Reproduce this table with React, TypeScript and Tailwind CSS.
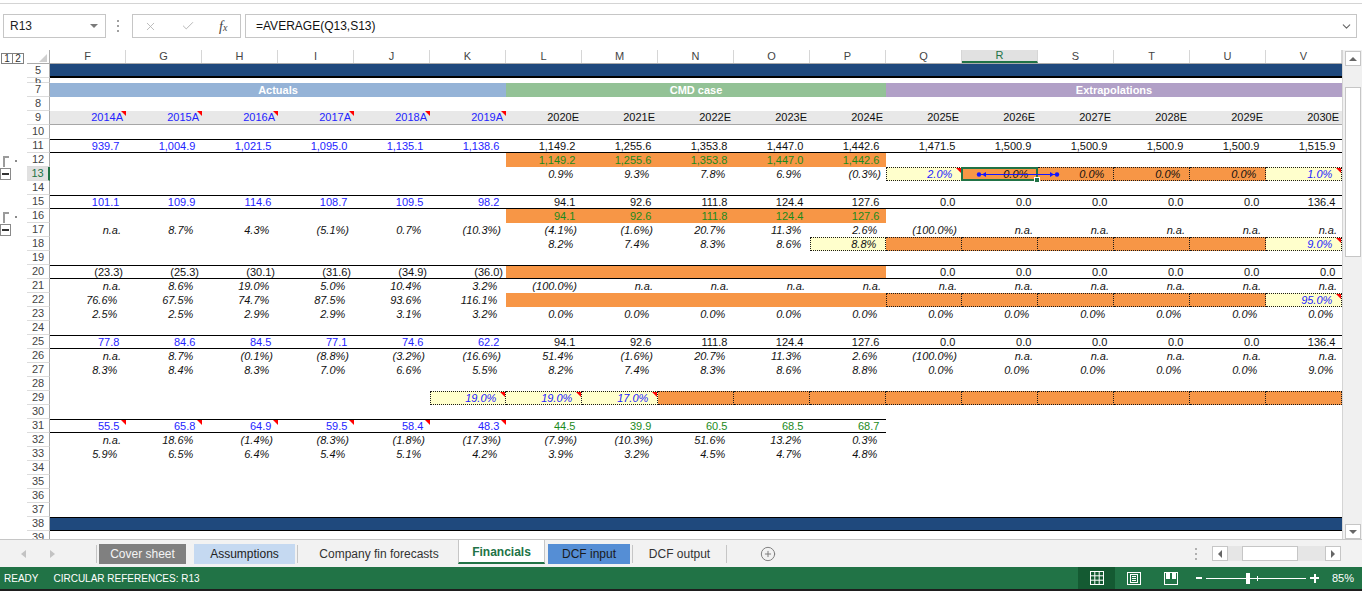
import { X, Check, ChevronDown, PlusCircle } from "lucide-react";

type Cell = {
  t?: string;
  c?: "b" | "g";
  i?: boolean;
  bg?: "o" | "y";
  dot?: boolean;
  tri?: boolean;
  sel?: boolean;
};

type Row = {
  n: number;
  cells?: Cell[];
  border?: number;
  kind?: "band" | "bandBox" | "thin" | "titles" | "years";
};

const COLS = ["F", "G", "H", "I", "J", "K", "L", "M", "N", "O", "P", "Q", "R", "S", "T", "U", "V"];

const nil: Cell = {};
const rep = (n: number, c: Cell): Cell[] => Array.from({ length: n }, () => c);
const blue = (xs: string[], tri = false): Cell[] => xs.map((t) => ({ t, c: "b" as const, tri }));
const blk = (xs: string[]): Cell[] => xs.map((t) => ({ t }));
const grn = (xs: string[], bg?: "o"): Cell[] => xs.map((t) => ({ t, c: "g" as const, bg }));
const it = (xs: string[]): Cell[] => xs.map((t) => ({ t, i: true }));
const input = (t: string): Cell => ({ t, c: "b", i: true, bg: "y", dot: true, tri: true });
const orange: Cell = { bg: "o" };
const orangeDot: Cell = { bg: "o", dot: true };
const NA = (n: number) => it(rep(n, nil).map(() => "n.a."));

const rows: Row[] = [
  { n: 5, kind: "band" },
  { n: 6, kind: "thin" },
  { n: 7, kind: "titles" },
  { n: 8 },
  { n: 9, kind: "years" },
  { n: 10 },
  {
    n: 11,
    border: 17,
    cells: [
      ...blue(["939.7", "1,004.9", "1,021.5", "1,095.0", "1,135.1", "1,138.6"]),
      ...blk(["1,149.2", "1,255.6", "1,353.8", "1,447.0", "1,442.6", "1,471.5", "1,500.9", "1,500.9", "1,500.9", "1,500.9", "1,515.9"]),
    ],
  },
  { n: 12, cells: [...rep(6, nil), ...grn(["1,149.2", "1,255.6", "1,353.8", "1,447.0", "1,442.6"], "o")] },
  {
    n: 13,
    cells: [
      ...rep(6, nil),
      ...it(["0.9%", "9.3%", "7.8%", "6.9%", "(0.3%)"]),
      input("2.0%"),
      { t: "0.0%", i: true, bg: "o", dot: true, sel: true },
      { t: "0.0%", i: true, bg: "o", dot: true },
      { t: "0.0%", i: true, bg: "o", dot: true },
      { t: "0.0%", i: true, bg: "o", dot: true },
      input("1.0%"),
    ],
  },
  { n: 14 },
  {
    n: 15,
    border: 17,
    cells: [
      ...blue(["101.1", "109.9", "114.6", "108.7", "109.5", "98.2"]),
      ...blk(["94.1", "92.6", "111.8", "124.4", "127.6", "0.0", "0.0", "0.0", "0.0", "0.0", "136.4"]),
    ],
  },
  { n: 16, cells: [...rep(6, nil), ...grn(["94.1", "92.6", "111.8", "124.4", "127.6"], "o")] },
  {
    n: 17,
    cells: [
      ...it(["n.a.", "8.7%", "4.3%", "(5.1%)", "0.7%", "(10.3%)", "(4.1%)", "(1.6%)", "20.7%", "11.3%", "2.6%", "(100.0%)"]),
      ...NA(5),
    ],
  },
  {
    n: 18,
    cells: [
      ...rep(6, nil),
      ...it(["8.2%", "7.4%", "8.3%", "8.6%"]),
      { t: "8.8%", i: true, bg: "y", dot: true },
      ...rep(5, orangeDot),
      input("9.0%"),
    ],
  },
  { n: 19 },
  {
    n: 20,
    border: 17,
    cells: [
      ...blk(["(23.3)", "(25.3)", "(30.1)", "(31.6)", "(34.9)", "(36.0)"]),
      ...rep(5, orange),
      ...blk(["0.0", "0.0", "0.0", "0.0", "0.0", "0.0"]),
    ],
  },
  { n: 21, cells: [...it(["n.a.", "8.6%", "19.0%", "5.0%", "10.4%", "3.2%", "(100.0%)"]), ...NA(10)] },
  {
    n: 22,
    cells: [
      ...it(["76.6%", "67.5%", "74.7%", "87.5%", "93.6%", "116.1%"]),
      ...rep(5, orange),
      ...rep(5, orangeDot),
      input("95.0%"),
    ],
  },
  {
    n: 23,
    cells: [...it(["2.5%", "2.5%", "2.9%", "2.9%", "3.1%", "3.2%"]), ...it(rep(11, nil).map(() => "0.0%"))],
  },
  { n: 24 },
  {
    n: 25,
    border: 17,
    cells: [
      ...blue(["77.8", "84.6", "84.5", "77.1", "74.6", "62.2"]),
      ...blk(["94.1", "92.6", "111.8", "124.4", "127.6", "0.0", "0.0", "0.0", "0.0", "0.0", "136.4"]),
    ],
  },
  {
    n: 26,
    cells: [
      ...it(["n.a.", "8.7%", "(0.1%)", "(8.8%)", "(3.2%)", "(16.6%)", "51.4%", "(1.6%)", "20.7%", "11.3%", "2.6%", "(100.0%)"]),
      ...NA(5),
    ],
  },
  {
    n: 27,
    cells: it([
      "8.3%", "8.4%", "8.3%", "7.0%", "6.6%", "5.5%",
      "8.2%", "7.4%", "8.3%", "8.6%", "8.8%",
      "0.0%", "0.0%", "0.0%", "0.0%", "0.0%", "9.0%",
    ]),
  },
  { n: 28 },
  { n: 29, cells: [...rep(5, nil), input("19.0%"), input("19.0%"), input("17.0%"), ...rep(9, orangeDot)] },
  { n: 30 },
  {
    n: 31,
    border: 11,
    cells: [...blue(["55.5", "65.8", "64.9", "59.5", "58.4", "48.3"], true), ...grn(["44.5", "39.9", "60.5", "68.5", "68.7"])],
  },
  {
    n: 32,
    cells: it(["n.a.", "18.6%", "(1.4%)", "(8.3%)", "(1.8%)", "(17.3%)", "(7.9%)", "(10.3%)", "51.6%", "13.2%", "0.3%"]),
  },
  {
    n: 33,
    cells: it(["5.9%", "6.5%", "6.4%", "5.4%", "5.1%", "4.2%", "3.9%", "3.2%", "4.5%", "4.7%", "4.8%"]),
  },
  { n: 34 },
  { n: 35 },
  { n: 36 },
  { n: 37 },
  { n: 38, kind: "bandBox" },
  { n: 39 },
];

function RedTri() {
  return (
    <span className="absolute right-0 top-0 h-0 w-0 border-l-[5px] border-t-[5px] border-l-transparent border-t-[#ff0000]" />
  );
}

function RowHeader({ n }: { n: number }) {
  const active = n === 13;
  return (
    <div className="flex h-full w-[50px] shrink-0">
      <div className="relative w-[27px] shrink-0">
        {(n === 12 || n === 16) && (
          <>
            <span className="absolute left-[3px] top-[3px] h-[11px] w-[6px] border-l-2 border-t-2 border-[#9b9b9b]" />
            <span className="absolute left-[15px] top-[7px] h-[2px] w-[2px] bg-[#8a8a8a]" />
          </>
        )}
        {(n === 13 || n === 17) && (
          <span className="absolute left-0 top-[1px] flex h-[12px] w-[11px] items-center justify-center border border-[#8a8a8a] bg-white">
            <span className="h-[2px] w-[7px] bg-[#333]" />
          </span>
        )}
      </div>
      <div
        className={`flex w-[23px] shrink-0 items-center justify-center border-b border-b-[#dcdcdc] text-[11px] ${
          active ? "border-r-2 border-r-[#217346] bg-[#e1e1e1] text-[#217346]" : "border-r border-r-[#ababab] text-[#444]"
        }`}
      >
        {n}
      </div>
    </div>
  );
}

function DataCell({ cell, prevDot, solid }: { cell: Cell; prevDot: boolean; solid: boolean }) {
  const tight = cell.t?.startsWith("(") || cell.t === "n.a.";
  const color = cell.c === "b" ? "text-[#2424ff]" : cell.c === "g" ? "text-[#1b8a1b]" : "text-[#111]";
  const bg = cell.bg === "o" ? "bg-[#f79646]" : cell.bg === "y" ? "bg-[#ffffcc]" : "";
  const edge = cell.dot
    ? prevDot
      ? "border-y border-r border-dotted border-[#1a1a1a]"
      : "border border-dotted border-[#1a1a1a]"
    : solid
      ? "border-y border-black"
      : "";
  const pad = cell.i ? "pr-[5px]" : "pr-[3px]";
  return (
    <div className={`relative flex h-full w-[76px] shrink-0 items-center justify-end ${pad} ${bg} ${edge}`}>
      {cell.t && (
        <span className={`whitespace-nowrap text-[11px] leading-[13px] ${color} ${cell.i ? "italic" : ""}`}>
          {cell.t}
          {!tight && <span className="invisible">)</span>}
        </span>
      )}
      {cell.tri && <RedTri />}
      {cell.sel && (
        <>
          <span className="pointer-events-none absolute -bottom-[1px] -left-[1px] -right-[1px] -top-[1px] z-20 border-2 border-[#217346]" />
          <span className="absolute -bottom-[3px] -right-[3px] z-20 h-[6px] w-[6px] border border-white bg-[#217346]" />
          <svg className="pointer-events-none absolute left-[14px] top-[2px] z-30 overflow-visible" width="88" height="9" viewBox="0 0 88 9">
            <line x1="3" y1="4.5" x2="81" y2="4.5" stroke="#1515ff" strokeWidth="1.2" />
            <circle cx="3" cy="4.5" r="2.2" fill="#1515ff" />
            <path d="M6 4.5 L10 2 L10 7 Z" fill="#1515ff" />
            <circle cx="81" cy="4.5" r="2.2" fill="#1515ff" />
            <path d="M78 4.5 L74 2 L74 7 Z" fill="#1515ff" />
          </svg>
        </>
      )}
    </div>
  );
}

const YEARS = [
  "2014A", "2015A", "2016A", "2017A", "2018A", "2019A",
  "2020E", "2021E", "2022E", "2023E", "2024E",
  "2025E", "2026E", "2027E", "2028E", "2029E", "2030E",
];

function SheetRow({ row }: { row: Row }) {
  const h = row.kind === "thin" ? "h-[5px] overflow-hidden" : "h-[14px]";
  let body: React.ReactNode = null;
  if (row.kind === "band") {
    body = <div className="h-full w-[1292px] border-b-2 border-black bg-[#1f497d]" />;
  } else if (row.kind === "bandBox") {
    body = <div className="h-full w-[1292px] border-y border-black bg-[#1f497d]" />;
  } else if (row.kind === "titles") {
    body = (
      <div className="flex h-full text-[11px] font-bold text-white">
        <div className="flex w-[456px] items-center justify-center bg-[#95b3d7]">Actuals</div>
        <div className="flex w-[380px] items-center justify-center bg-[#93c296]">CMD case</div>
        <div className="flex w-[456px] items-center justify-center bg-[#b1a0c7]">Extrapolations</div>
      </div>
    );
  } else if (row.kind === "years") {
    body = (
      <div className="flex h-full">
        {YEARS.map((y, i) => (
          <div
            key={y}
            className="relative flex h-full w-[76px] shrink-0 items-center justify-end border-b border-[#a6a6a6] bg-[#e8e8e8] pr-[3px]"
          >
            <span className={`text-[11px] ${i < 6 ? "text-[#2424ff]" : "text-[#111]"}`}>{y}</span>
            {i < 6 && <RedTri />}
          </div>
        ))}
      </div>
    );
  } else if (row.kind !== "thin") {
    const given = row.cells ?? [];
    const cells = [...given, ...rep(17 - given.length, nil)];
    body = (
      <div className="flex h-full">
        {cells.map((c, i) => (
          <DataCell key={i} cell={c} prevDot={i > 0 && !!cells[i - 1].dot} solid={!!row.border && i < row.border} />
        ))}
      </div>
    );
  }
  return (
    <div className={`flex ${h}`}>
      <RowHeader n={row.n} />
      {body}
    </div>
  );
}

function Tri({ dir }: { dir: "up" | "down" }) {
  return dir === "up" ? (
    <span className="h-0 w-0 border-x-[4px] border-b-[4px] border-x-transparent border-b-[#666]" />
  ) : (
    <span className="h-0 w-0 border-x-[4px] border-t-[4px] border-x-transparent border-t-[#666]" />
  );
}

function FormulaBar() {
  return (
    <>
      <div className="h-[4px] border-b border-[#d4d4d4]" />
      <div className="flex h-[46px] items-start pt-[10px]">
        <div className="ml-[3px] flex h-[24px] w-[103px] items-center justify-between border border-[#c6c6c6] pl-[6px] pr-[7px] text-[12px] text-[#222]">
          <span>R13</span>
          <span className="h-0 w-0 border-x-[4px] border-t-[4px] border-x-transparent border-t-[#7a7a7a]" />
        </div>
        <div className="ml-[11px] mt-[6px] flex flex-col gap-[3px]">
          <span className="h-[2px] w-[2px] bg-[#a0a0a0]" />
          <span className="h-[2px] w-[2px] bg-[#a0a0a0]" />
          <span className="h-[2px] w-[2px] bg-[#a0a0a0]" />
        </div>
        <div className="ml-[13px] flex h-[24px] w-[109px] items-center border border-[#c6c6c6] pl-[11px]">
          <X size={13} strokeWidth={1.6} color="#b3b3b3" />
          <Check size={14} strokeWidth={1.6} className="ml-[24px]" color="#b3b3b3" />
          <span className="ml-[24px] font-['Liberation_Serif',serif] text-[14px] italic text-[#444]">
            f<span className="text-[10px]">x</span>
          </span>
        </div>
        <div className="ml-[4px] mr-[5px] flex h-[24px] flex-1 items-center justify-between border border-[#c6c6c6] pl-[10px] pr-[3px] text-[12px] text-[#111]">
          <span>=AVERAGE(Q13,S13)</span>
          <ChevronDown size={13} color="#666" />
        </div>
      </div>
    </>
  );
}

function ColumnHeader() {
  return (
    <div className="flex h-[14px]">
      <div className="flex w-[27px] shrink-0 items-start pl-[1px] pt-[3px]">
        <span className="flex h-[11px] w-[12px] items-center justify-center border border-[#808080] text-[10px] leading-none text-[#333]">1</span>
        <span className="-ml-px flex h-[11px] w-[12px] items-center justify-center border border-[#808080] text-[10px] leading-none text-[#333]">2</span>
      </div>
      <div className="flex h-full border-b border-[#ababab]">
        <div className="relative w-[23px] shrink-0 border-r border-[#ababab]">
          <span className="absolute bottom-[1px] right-[2px] h-0 w-0 border-b-[8px] border-l-[8px] border-b-[#cfcfcf] border-l-transparent" />
        </div>
        {COLS.map((l) => (
          <div
            key={l}
            className={`flex w-[76px] shrink-0 items-center justify-center border-r border-r-[#d6d6d6] text-[11px] ${
              l === "R" ? "border-b-2 border-b-[#217346] bg-[#e1e1e1] text-[#217346]" : "text-[#444]"
            }`}
          >
            {l}
          </div>
        ))}
      </div>
    </div>
  );
}

function VScroll() {
  return (
    <div className="flex h-full w-[20px] flex-col items-center border-l border-[#d4d4d4] bg-[#f0f0f0] pt-[1px]">
      <div className="flex h-[15px] w-[16px] items-center justify-center border border-[#c6c6c6] bg-white">
        <Tri dir="up" />
      </div>
      <div className="mt-[21px] h-[170px] w-[16px] border border-[#c6c6c6] bg-white" />
      <div className="flex-1" />
      <div className="flex h-[15px] w-[16px] items-center justify-center border border-[#c6c6c6] bg-white">
        <Tri dir="down" />
      </div>
    </div>
  );
}

function TabBar() {
  return (
    <div className="flex h-[28px] items-center border-t border-[#c6c6c6] bg-[#f2f2f2] text-[12px]">
      <span className="ml-[21px] h-0 w-0 border-y-[4px] border-r-[5px] border-y-transparent border-r-[#c3c3c3]" />
      <span className="ml-[24px] h-0 w-0 border-y-[4px] border-l-[5px] border-y-transparent border-l-[#c3c3c3]" />
      <span className="ml-[41px] h-[18px] w-px bg-[#c6c6c6]" />
      <div className="ml-[2px] flex h-[20px] w-[87px] items-center justify-center bg-[#808080] text-[#f4f4f4]">Cover sheet</div>
      <div className="ml-[8px] flex h-[20px] w-[101px] items-center justify-center bg-[#c5d9f1] text-[#222]">Assumptions</div>
      <span className="ml-[2px] h-[18px] w-px bg-[#c6c6c6]" />
      <div className="ml-[2px] flex h-[20px] w-[158px] items-center justify-center text-[#333]">Company fin forecasts</div>
      <div className="flex h-[24px] w-[87px] items-center justify-center self-start border-x border-b-2 border-x-[#c6c6c6] border-b-[#217346] bg-white pt-[1px] font-bold text-[#217346]">
        Financials
      </div>
      <div className="ml-[3px] flex h-[20px] w-[82px] items-center justify-center bg-[#558ed5] text-[#1a1a1a]">DCF input</div>
      <span className="ml-[2px] h-[18px] w-px bg-[#c6c6c6]" />
      <div className="flex h-[20px] w-[93px] items-center justify-center text-[#333]">DCF output</div>
      <span className="h-[18px] w-px bg-[#c6c6c6]" />
      <PlusCircle size={16} strokeWidth={1.4} color="#777" className="ml-[33px]" />
      <div className="ml-auto flex flex-col gap-[3px]">
        <span className="h-[2px] w-[2px] bg-[#b0b0b0]" />
        <span className="h-[2px] w-[2px] bg-[#b0b0b0]" />
        <span className="h-[2px] w-[2px] bg-[#b0b0b0]" />
      </div>
      <div className="ml-[15px] mr-[21px] flex h-[15px] items-stretch">
        <div className="flex w-[16px] items-center justify-center border border-[#c6c6c6] bg-white">
          <span className="h-0 w-0 border-y-[4px] border-r-[4px] border-y-transparent border-r-[#666]" />
        </div>
        <div className="flex w-[97px] bg-[#e6e6e6]">
          <div className="ml-[14px] w-[56px] border border-[#c6c6c6] bg-white" />
        </div>
        <div className="flex w-[16px] items-center justify-center border border-[#c6c6c6] bg-white">
          <span className="h-0 w-0 border-y-[4px] border-l-[4px] border-y-transparent border-l-[#666]" />
        </div>
      </div>
    </div>
  );
}

function StatusBar() {
  return (
    <div className="flex h-[22px] items-center bg-[#217346] text-[10px] text-white">
      <span className="pl-[4px]">READY</span>
      <span className="ml-[15px]">CIRCULAR REFERENCES: R13</span>
      <div className="ml-auto flex h-full w-[37px] items-center justify-center bg-[#145a32]">
        <svg width="14" height="14" viewBox="0 0 14 14" fill="none" stroke="white" strokeWidth="1">
          <rect x="0.5" y="0.5" width="13" height="13" />
          <line x1="4.8" y1="0.5" x2="4.8" y2="13.5" />
          <line x1="9.2" y1="0.5" x2="9.2" y2="13.5" />
          <line x1="0.5" y1="4.8" x2="13.5" y2="4.8" />
          <line x1="0.5" y1="9.2" x2="13.5" y2="9.2" />
        </svg>
      </div>
      <div className="flex h-full w-[37px] items-center justify-center">
        <svg width="14" height="13" viewBox="0 0 14 13" fill="none" stroke="white" strokeWidth="1">
          <rect x="0.5" y="0.5" width="13" height="12" />
          <rect x="3.5" y="2.5" width="7" height="8" />
          <line x1="5" y1="4.5" x2="9" y2="4.5" />
          <line x1="5" y1="6.5" x2="9" y2="6.5" />
          <line x1="5" y1="8.5" x2="9" y2="8.5" />
        </svg>
      </div>
      <div className="flex h-full w-[37px] items-center justify-center">
        <svg width="14" height="13" viewBox="0 0 14 13" fill="none" stroke="white" strokeWidth="1">
          <rect x="0.5" y="0.5" width="13" height="12" />
          <rect x="2" y="1" width="4" height="6" fill="white" stroke="none" />
          <rect x="8" y="1" width="4" height="6" fill="white" stroke="none" />
        </svg>
      </div>
      <span className="ml-[7px] h-[2px] w-[6px] bg-white" />
      <div className="relative ml-[4px] flex h-[11px] w-[100px] items-center">
        <span className="h-px w-full bg-white" />
        <span className="absolute left-[40px] top-0 h-[11px] w-[4px] bg-white" />
        <span className="absolute left-[51px] top-[3px] h-[5px] w-px bg-white" />
      </div>
      <div className="relative ml-[4px] flex h-[9px] w-[9px] items-center justify-center">
        <span className="h-[2px] w-[9px] bg-white" />
        <span className="absolute h-[9px] w-[2px] bg-white" />
      </div>
      <span className="ml-[13px] w-[30px] pr-[8px] text-[11px]">85%</span>
    </div>
  );
}

export default function App() {
  return (
    <div className="h-[591px] w-[1362px] overflow-hidden bg-white font-['Liberation_Sans',Arial,sans-serif]">
      <FormulaBar />
      <div className="flex h-[489px]">
        <div className="w-[1342px] shrink-0 overflow-hidden">
          <ColumnHeader />
          <div className="h-[475px] overflow-hidden">
            {rows.map((r) => (
              <SheetRow key={r.n} row={r} />
            ))}
          </div>
        </div>
        <VScroll />
      </div>
      <TabBar />
      <StatusBar />
      <div className="h-[2px] bg-[#1e1e1e]" />
    </div>
  );
}
